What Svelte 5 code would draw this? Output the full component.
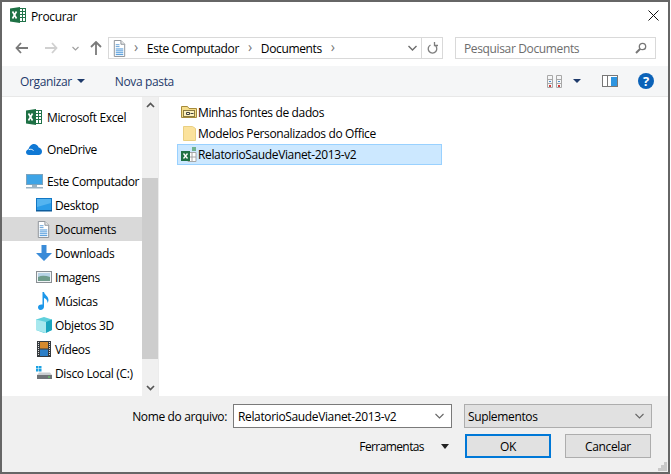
<script>
	const places = [
		{ name: 'Desktop', icon: 'desktop' },
		{ name: 'Documents', icon: 'docs', selected: true },
		{ name: 'Downloads', icon: 'down' },
		{ name: 'Imagens', icon: 'pics' },
		{ name: 'Músicas', icon: 'music' },
		{ name: 'Objetos 3D', icon: 'cube' },
		{ name: 'Vídeos', icon: 'film' },
		{ name: 'Disco Local (C:)', icon: 'disk' }
	];
</script>

{#snippet xl()}
	<svg width="16" height="16" viewBox="0 0 16 16">
		<rect x="7.500" y="1.500" width="8" height="13" fill="#fff" stroke="#21734a" />
		<path d="M10 4.500h5M10 7.500h5M10 10.500h5M12.500 2v12" stroke="#21734a" stroke-width="1" />
		<path d="M0 1.500L10 0v16L0 14.500z" fill="#1e7145" />
		<path d="M2.500 4.500l4 7M6.500 4.500l-4 7" stroke="#fff" stroke-width="1.600" />
	</svg>
{/snippet}

{#snippet docs(size)}
	<svg width={size} height={size} viewBox="0 0 16 18">
		<path d="M2.500.5h7l4 4v13h-11z" fill="#fff" stroke="#8b9097" />
		<path d="M9.500.5v4h4" fill="#e8e8e8" stroke="#8b9097" />
		<path d="M4 5h4M4 7h4" stroke="#5b9bd5" />
		<path d="M4 9.500h8M4 11.500h8M4 13.500h8M4 15.500h8" stroke="#3f8fd8" />
	</svg>
{/snippet}

{#snippet placeIcon(kind)}
	{#if kind === 'desktop'}
		<svg width="16" height="14" viewBox="0 0 16 14">
			<rect x="0.500" y="0.500" width="15" height="12" fill="#2b9ce8" stroke="#1277c4" />
			<path d="M1 1h14v4L1 9z" fill="#54b4f0" />
			<rect x="0" y="12" width="16" height="1.500" fill="#0d5c9c" />
		</svg>
	{:else if kind === 'docs'}
		{@render docs(17)}
	{:else if kind === 'down'}
		<svg width="16" height="16" viewBox="0 0 16 16">
			<path d="M5.500 0h5v8H16l-8 8-8-8h5.500z" fill="#3a8bd8" />
		</svg>
	{:else if kind === 'pics'}
		<svg width="16" height="12" viewBox="0 0 16 12">
			<rect x="0.500" y="0.500" width="15" height="11" fill="#f0f4f6" stroke="#8a8f94" />
			<rect x="2" y="2" width="12" height="4" fill="#b7d3e6" />
			<path d="M2 6c4-2 8-1 12 0v4H2z" fill="#6f9c8c" />
		</svg>
	{:else if kind === 'music'}
		<svg width="14" height="18" viewBox="0 0 14 18">
			<path d="M5.500 0h1.500c.5 3 4.500 4 4.500 8 0 1-.4 2-1 3 .2-3-2-4.500-3.500-5v8.500c0 2-1.500 3.500-3.500 3.500S1 16.500 1 15s1.800-3 4.500-2.500z" fill="#1c97ea" />
		</svg>
	{:else if kind === 'cube'}
		<svg width="16" height="16" viewBox="0 0 16 16">
			<path d="M8 0l8 2.500V13l-8 3-8-3V2.500z" fill="#5fd0dc" />
			<path d="M10 5l6-2.500V13l-6 3z" fill="#1aa5bd" />
			<path d="M0 2.500L10 5v11l-10-3z" fill="#a8e8ee" />
		</svg>
	{:else if kind === 'film'}
		<svg width="14" height="16" viewBox="0 0 14 16">
			<rect width="14" height="16" fill="#35393d" />
			<rect x="3" y="1" width="8" height="6.500" fill="#d58a2e" />
			<rect x="3" y="8.500" width="8" height="6.500" fill="#2c7fc7" />
			<path d="M1.500 1v14M12.500 1v14" stroke="#ddd" stroke-dasharray="1 1" />
		</svg>
	{:else}
		<svg width="16" height="14" viewBox="0 0 16 14">
			<path d="M0 0h2.500v2.500H0zM3 0h2.500v2.500H3zM0 3h2.500v2.500H0zM3 3h2.500v2.500H3z" fill="#1ba1e2" />
			<rect x="1" y="9" width="15" height="4" fill="#6f7377" />
			<path d="M3 6.500h11l2 2.500H1z" fill="#c9cdd0" />
			<rect x="12" y="10.500" width="2" height="1" fill="#5fe05f" />
		</svg>
	{/if}
{/snippet}

<div class="window">
	<header class="titlebar">
		{@render xl()}
		<span>Procurar</span>
		<svg class="close" width="11" height="11" viewBox="0 0 11 11">
			<path d="M.5.500l10 10M10.500.500l-10 10" stroke="#111" stroke-width="1" />
		</svg>
	</header>

	<nav class="navbar">
		<svg class="nav-arrow" width="13" height="12" viewBox="0 0 13 12">
			<path d="M6 1L1.500 6 6 11M1.500 6H13" fill="none" stroke="#7a7a7a" stroke-width="1.800" />
		</svg>
		<svg class="nav-arrow fwd" width="13" height="12" viewBox="0 0 13 12">
			<path d="M7 1l4.500 5L7 11M11.500 6H0" fill="none" stroke="#d0d0d0" stroke-width="1.800" />
		</svg>
		<svg class="nav-down" width="7" height="5" viewBox="0 0 7 5">
			<path d="M.5 1l3 3 3-3" fill="none" stroke="#a0a0a0" stroke-width="1.200" />
		</svg>
		<svg class="nav-up" width="12" height="14" viewBox="0 0 12 14">
			<path d="M1 6l5-5 5 5M6 1v13" fill="none" stroke="#7a7a7a" stroke-width="1.800" />
		</svg>
		<div class="address">
			<span class="addr-icon">{@render docs(17)}</span>
			<span class="chev">›</span>
			<span>Este Computador</span>
			<span class="chev">›</span>
			<span>Documents</span>
			<span class="chev">›</span>
			<span class="spacer"></span>
			<svg class="addr-caret" width="9" height="6" viewBox="0 0 9 6">
				<path d="M.5 1l4 4 4-4" fill="none" stroke="#6d6d6d" stroke-width="1.400" />
			</svg>
			<span class="refresh">
				<svg width="11" height="12" viewBox="0 0 11 12">
					<path d="M3.500 3a4.300 4.300 0 1 0 4 0M7.500 0v3.500H11" fill="none" stroke="#7d7d7d" stroke-width="1.300" />
				</svg>
			</span>
		</div>
		<div class="search">
			<span>Pesquisar Documents</span>
			<svg width="12" height="12" viewBox="0 0 12 12">
				<circle cx="7.500" cy="4.500" r="3.200" fill="none" stroke="#777" stroke-width="1.300" />
				<path d="M5 7L1 11" stroke="#777" stroke-width="2" />
			</svg>
		</div>
	</nav>

	<div class="toolbar">
		<span class="tool">Organizar</span>
		<span class="tb-caret"></span>
		<span class="tool new">Nova pasta</span>
		<span class="spacer"></span>
		<svg class="views" width="16" height="13" viewBox="0 0 16 13">
			<path d="M.5.500h5v12h-5zM9.500.500h5v12h-5zM.5 4.500h5M.5 8.500h5M9.500 4.500h5M9.500 8.500h5" fill="none" stroke="#a8a8a8" />
			<path d="M2 10h2v2H2zM11 10h2v2h-2z" fill="#d04040" />
			<path d="M2 6h2v1H2zM11 6h2v1h-2z" fill="#4a90d0" />
		</svg>
		<span class="tb-caret views-caret"></span>
		<svg class="pane" width="16" height="12" viewBox="0 0 16 12">
			<rect x="0.500" y="0.500" width="15" height="11" fill="#fff" stroke="#777" />
			<rect x="5" y="1" width="1" height="10" fill="#777" />
			<rect x="9" y="2" width="6" height="9" fill="#2e95e0" />
		</svg>
		<span class="help">?</span>
	</div>

	<main class="body">
		<aside class="sidebar">
			<ul class="tree">
				<li class="top first"><span class="ti">{@render xl()}</span>Microsoft Excel</li>
				<li class="top gap">
					<span class="ti">
						<svg width="16" height="11" viewBox="0 0 16 11">
							<path d="M3 11C1.300 11 0 9.800 0 8.200 0 6.800 1 5.700 2.400 5.500 3 2.500 5.200 0 8 0c2.100 0 3.800 1.200 4.700 3.500C14.600 4 16 5.500 16 7.500c0 2-1.400 3.500-3.300 3.500z" fill="#0f78d4" />
							<path d="M3 5.500c2-.5 3-.2 4.500 1" fill="none" stroke="#fff" stroke-width="1" />
						</svg>
					</span>
					OneDrive
				</li>
				<li class="top gap">
					<span class="ti">
						<svg width="17" height="15" viewBox="0 0 17 15">
							<rect x="0.500" y="0.500" width="16" height="10" fill="#3ea4e6" stroke="#7ba3bd" />
							<rect x="6" y="11" width="5" height="2" fill="#9bb4c4" />
							<rect x="0" y="13" width="17" height="1.500" fill="#9bb4c4" />
						</svg>
					</span>
					Este Computador
				</li>
				{#each places as place}
					<li class="place" class:selected={place.selected}>
						<span class="pi">{@render placeIcon(place.icon)}</span>{place.name}
					</li>
				{/each}
			</ul>
			<div class="scrollbar">
				<svg class="sb-arrow" width="9" height="6" viewBox="0 0 9 6">
					<path d="M1 5l3.500-3.500L8 5" fill="none" stroke="#555" stroke-width="1.700" />
				</svg>
				<div class="thumb"></div>
				<svg class="sb-arrow" width="9" height="6" viewBox="0 0 9 6">
					<path d="M1 1l3.500 3.500L8 1" fill="none" stroke="#555" stroke-width="1.700" />
				</svg>
			</div>
		</aside>
		<section class="files">
			<div class="file">
				<svg width="16" height="15" viewBox="0 0 16 15">
					<path d="M.5 12.500V1.500h6l1.500 2h7.500v9z" fill="#f5dd8b" stroke="#a58a3a" />
					<rect x="2.500" y="5.500" width="11" height="6" fill="#fdf1c0" stroke="#8a7a40" />
					<path d="M5.500 7.500h3v2h-3zM9.500 8.500h3" stroke="#444" fill="none" />
				</svg>
				<span>Minhas fontes de dados</span>
			</div>
			<div class="file">
				<svg width="16" height="17" viewBox="0 0 16 17">
					<path d="M2.500 1.500h9l3 2v12h-12z" fill="#fbe29c" stroke="#e9cf82" />
				</svg>
				<span>Modelos Personalizados do Office</span>
			</div>
			<div class="file active">
				<svg width="16" height="15" viewBox="0 0 16 15">
					<rect x="11" y="0" width="4" height="4" fill="#6fb28f" />
					<path d="M7 5.500h8v9H7zM11 5.500v9M7 10h8" fill="#fff" stroke="#a6a6a6" />
					<rect x="0" y="4" width="9" height="10" fill="#1e7145" />
					<path d="M2.500 6.500l4 5M6.500 6.500l-4 5" stroke="#fff" stroke-width="1.300" />
				</svg>
				<span>RelatorioSaudeVianet-2013-v2</span>
			</div>
		</section>
	</main>

	<footer class="footer">
		<div class="line">
			<span class="fname-label">Nome do arquivo:</span>
			<div class="fname">
				<span>RelatorioSaudeVianet-2013-v2</span>
				<svg width="9" height="6" viewBox="0 0 9 6">
					<path d="M.5 1l4 4 4-4" fill="none" stroke="#666" stroke-width="1.100" />
				</svg>
			</div>
			<div class="ftype">
				<span>Suplementos</span>
				<svg width="9" height="6" viewBox="0 0 9 6">
					<path d="M.5 1l4 4 4-4" fill="none" stroke="#666" stroke-width="1.100" />
				</svg>
			</div>
		</div>
		<div class="line actions">
			<span class="tools">Ferramentas</span>
			<span class="tools-caret"></span>
			<button class="ok">OK</button>
			<button class="cancel">Cancelar</button>
		</div>
		<svg class="grip" width="12" height="12" viewBox="0 0 12 12">
			<path d="M9 0h3v3H9zM6 3h3v3H6zM9 3h3v3H9zM3 6h3v3H3zM6 6h3v3H6zM9 6h3v3H9z" fill="#c9c9c9" transform="translate(0 3)" />
		</svg>
	</footer>
</div>

<style>
	:global(body) {
		margin: 0;
		background: #fff;
	}

	.window {
		width: 670px;
		height: 474px;
		box-sizing: border-box;
		border: 2px solid #666;
		display: flex;
		flex-direction: column;
		overflow: hidden;
		background: #fff;
		font-family: "Open Sans", "Noto Sans", sans-serif;
		font-size: 12px;
		letter-spacing: -0.36px;
		color: #000;
	}

	.spacer {
		flex: 1;
	}

	.titlebar {
		height: 28px;
		flex: none;
		display: flex;
		align-items: center;
		gap: 5px;
		padding: 0 7px 0 8px;
	}

	.titlebar svg:first-child {
		margin-top: -2px;
	}

	.close {
		margin-left: auto;
		margin-right: 2px;
		margin-top: -1px;
	}

	.navbar {
		height: 36px;
		flex: none;
		display: flex;
		align-items: center;
		padding-left: 13px;
		padding-right: 12px;
	}

	.fwd {
		margin-left: 17px;
	}

	.nav-down {
		margin-left: 14px;
	}

	.nav-up {
		margin-left: 11px;
	}

	.address {
		margin-left: 6px;
		width: 335px;
		height: 22px;
		box-sizing: border-box;
		border: 1px solid #d9d9d9;
		display: flex;
		align-items: center;
	}

	.addr-icon {
		display: flex;
		margin-left: 2px;
		margin-right: -3px;
	}

	.chev {
		color: #777;
		font-size: 14px;
		line-height: 14px;
		margin: -2px 9px 0 9px;
	}

	.addr-caret {
		margin-right: 4px;
	}

	.refresh {
		width: 20px;
		height: 100%;
		border-left: 1px solid #d9d9d9;
		display: flex;
		align-items: center;
		justify-content: center;
	}

	.search {
		margin-left: 12px;
		flex: 1;
		height: 22px;
		box-sizing: border-box;
		border: 1px solid #d9d9d9;
		padding: 0 8px;
		display: flex;
		align-items: center;
		justify-content: space-between;
		color: #6d6d6d;
	}

	.toolbar {
		height: 31px;
		flex: none;
		box-sizing: border-box;
		background: #f5f6f7;
		border-bottom: 1px solid #e8e8e8;
		display: flex;
		align-items: center;
		padding: 0 14px 0 18px;
		color: #1e3a6b;
	}

	.tb-caret {
		width: 0;
		height: 0;
		border: 4px solid transparent;
		border-top: 4px solid #1e3a6b;
		border-bottom: 0;
		margin-left: 5px;
	}

	.new {
		margin-left: 30px;
	}

	.views-caret {
		margin-left: 10px;
	}

	.pane {
		margin-left: 21px;
	}

	.help {
		margin-left: 20px;
		width: 16px;
		height: 16px;
		border-radius: 50%;
		background: #0b62b8;
		color: #fff;
		font-weight: 700;
		font-size: 13px;
		line-height: 16px;
		text-align: center;
	}

	.body {
		flex: 1;
		min-height: 0;
		display: flex;
	}

	.sidebar {
		width: 156px;
		flex: none;
		display: flex;
		border-right: 1px solid #ececec;
		margin-right: 2px;
	}

	.tree {
		list-style: none;
		margin: 0;
		padding: 0;
		width: 140px;
		flex: none;
	}

	.top {
		height: 24px;
		display: flex;
		align-items: center;
		padding-left: 24px;
	}

	.top.first {
		margin-top: 8px;
	}

	.top.gap {
		margin-top: 8px;
	}

	.ti {
		width: 21px;
		flex: none;
		display: flex;
		align-items: center;
	}

	.place {
		height: 24px;
		display: flex;
		align-items: center;
		padding-left: 32px;
	}

	.place.selected {
		background: #d9d9d9;
	}

	.pi {
		width: 21px;
		flex: none;
		display: flex;
		align-items: center;
		justify-content: center;
		margin-left: -1px;
		margin-right: 1px;
	}

	.scrollbar {
		width: 16px;
		flex: none;
		background: #f0f0f0;
		display: flex;
		flex-direction: column;
		align-items: center;
	}

	.sb-arrow {
		margin: 5px 0;
		flex: none;
	}

	.thumb {
		width: 100%;
		height: 181px;
		margin-top: 65px;
		margin-bottom: 21px;
		background: #cdcdcd;
	}

	.files {
		flex: 1;
		padding: 5px 0 0 16px;
	}

	.file {
		width: 265px;
		height: 21px;
		box-sizing: border-box;
		display: flex;
		align-items: center;
		gap: 1px;
		padding-left: 4px;
	}

	.file.active {
		background: #cce8ff;
		border: 1px solid #99d1ff;
		padding-left: 3px;
	}

	.footer {
		position: relative;
		height: 76px;
		flex: none;
		background: #f0f0f0;
		padding: 8px 16px 0 0;
		box-sizing: border-box;
	}

	.grip {
		position: absolute;
		right: 1px;
		bottom: 1px;
	}

	.line {
		display: flex;
		align-items: center;
		justify-content: flex-end;
	}

	.fname-label {
		margin-right: 6px;
	}

	.fname {
		width: 219px;
		height: 24px;
		box-sizing: border-box;
		background: #fff;
		border: 1px solid #7a7a7a;
		display: flex;
		align-items: center;
		justify-content: space-between;
		padding: 0 7px 0 4px;
	}

	.ftype {
		margin-left: 12px;
		width: 188px;
		height: 24px;
		box-sizing: border-box;
		background: #e1e1e1;
		border: 1px solid #adadad;
		display: flex;
		align-items: center;
		justify-content: space-between;
		padding: 0 7px 0 3px;
	}

	.actions {
		margin-top: 6px;
		margin-right: 1px;
	}

	.tools {
		letter-spacing: -0.6px;
	}

	.tools-caret {
		width: 0;
		height: 0;
		border: 4px solid transparent;
		border-top: 5px solid #222;
		border-bottom: 0;
		margin: 0 16px 0 17px;
	}

	button {
		font: inherit;
		letter-spacing: inherit;
		height: 24px;
		width: 86px;
		box-sizing: border-box;
		background: #e1e1e1;
		border: 1px solid #adadad;
		padding: 0;
		color: #000;
	}

	.ok {
		border: 2px solid #0078d7;
	}

	.cancel {
		margin-left: 14px;
	}
</style>
